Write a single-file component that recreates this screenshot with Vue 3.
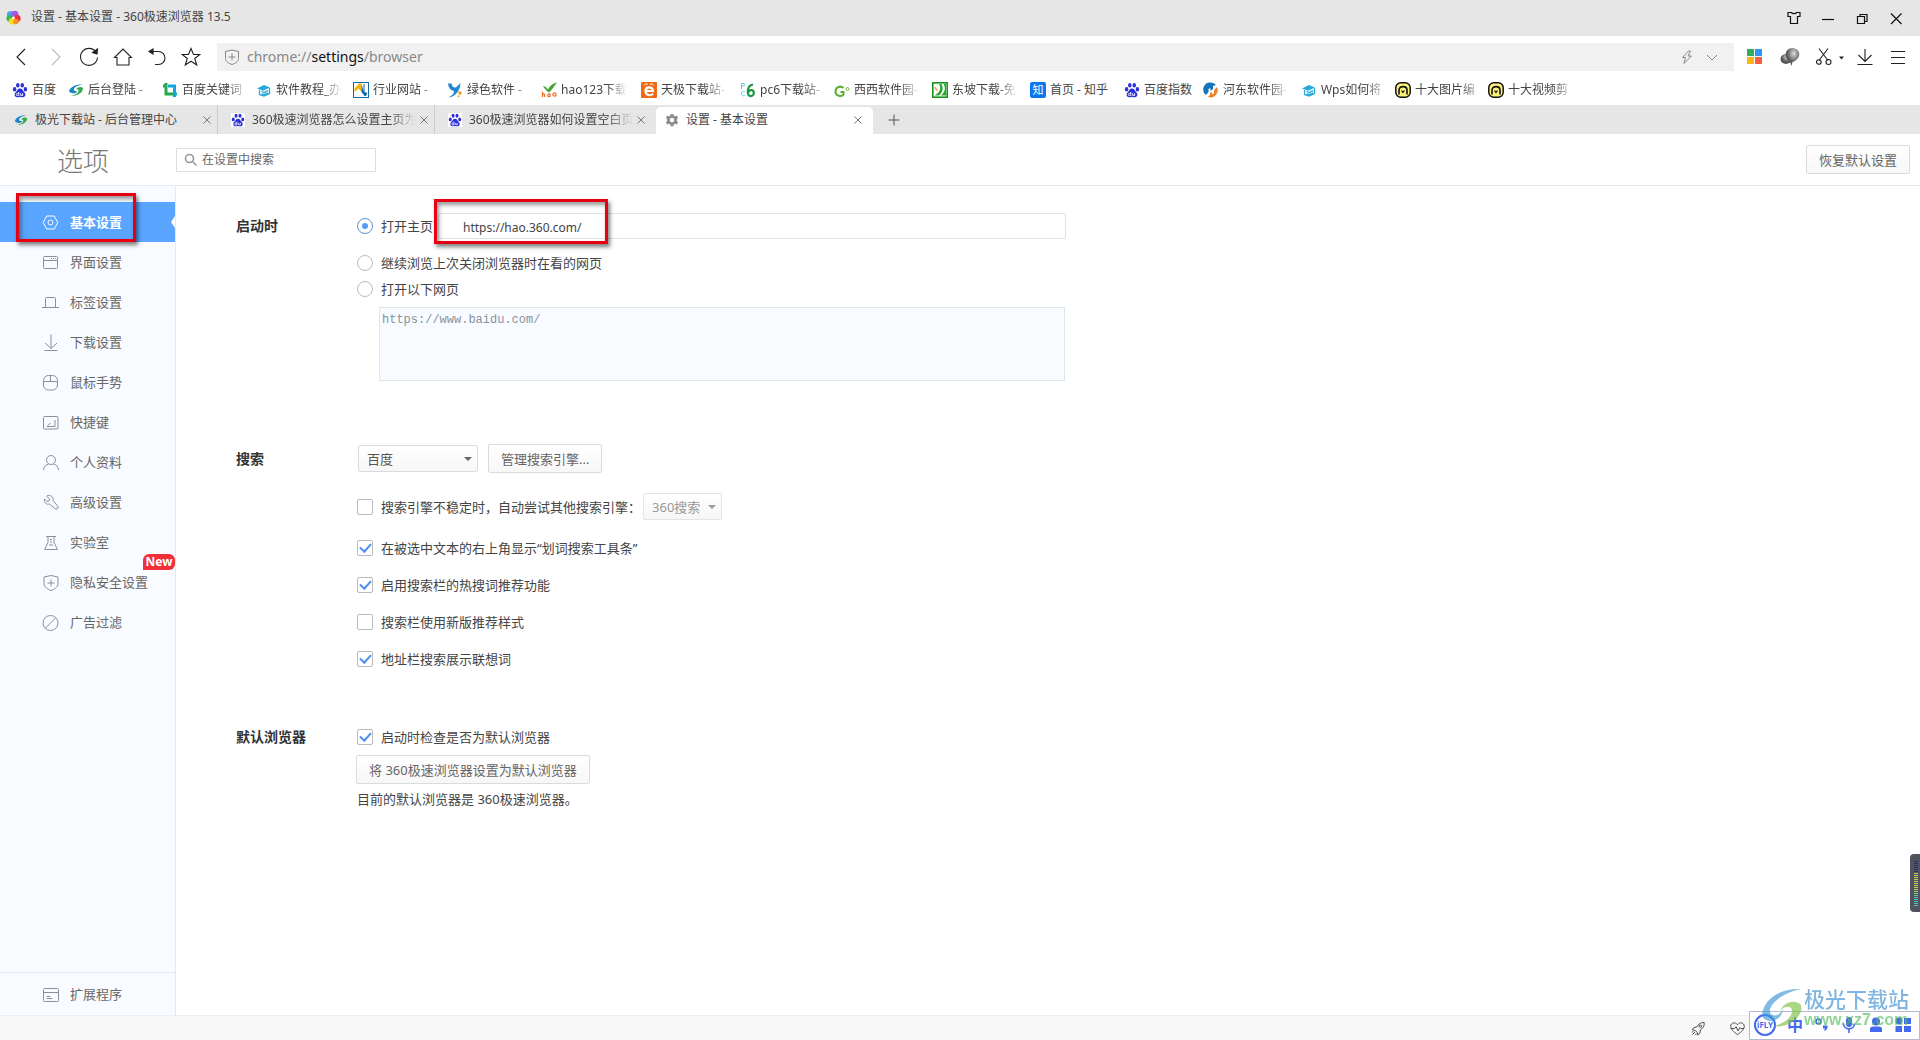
<script setup>
import { ref } from 'vue'

const paw =
  '<g fill="#2a2fd8"><ellipse cx="2.6" cy="7.3" rx="1.7" ry="2.2"/><ellipse cx="5.8" cy="3.2" rx="1.7" ry="2.3"/><ellipse cx="10.3" cy="3.2" rx="1.7" ry="2.3"/><ellipse cx="13.4" cy="7.3" rx="1.7" ry="2.2"/><path d="M8 6.6c2.4 0 2.8 2.4 4.3 3.7 1.8 1.5 1.4 4.8-1.3 4.9-1.300.1-1.800-.3-3-.3s-1.700.4-3 .3c-2.700-.1-3.100-3.400-1.300-4.900C5.200 9 5.600 6.600 8 6.600z"/></g><path d="M6.800 10v3.600H5.400a1 1 0 0 1 0-2.200h1.400M8.700 11.200v2.200h2v-2.200" fill="none" stroke="#fff" stroke-width=".9"/>'
const swirl =
  '<path d="M1 9.500C2 5 7 2.300 14.500 2.500 9 3.400 6 5.500 5.800 7.600c-.1 1.700 2.200 2 3.700 1.400C8 12 3.500 12 1 9.500z" fill="#1686c9"/><path d="M15 6c0 4.500-5 8-12.500 7.800C7 13 10.300 11 10.600 9c.2-1.600-1.400-1.900-2.600-1.600C10 4.600 13.500 4.500 15 6z" fill="#37a94a"/>'
const cap =
  '<path d="M1 6.500 8 3l6 2.500-7 3.300z" fill="#27a9d8"/><g fill="none" stroke="#27a9d8" stroke-width="1.300"><path d="M3.500 8v4.500L8 14l5.500-2.500V6M5.500 9.500l2.500 1 4-1.800M5.500 12l2.500.6 4-1.800"/></g>'
const face =
  '<rect x=".8" y=".8" width="14.400" height="14.400" rx="5" fill="#fff27a" stroke="#111" stroke-width="1.500"/><path d="M4 12.500V8c0-4.500 8-4.500 8 0v4.500" fill="none" stroke="#111" stroke-width="1.600"/><path d="M6.500 8.500 8 10.500l1.500-2" fill="none" stroke="#111" stroke-width="1.200"/>'

const art = {
  paw,
  swirl,
  cap,
  face,
  crop: '<path d="M4 1v11h8M1 4h4" stroke="#27a84a" fill="none" stroke-width="3"/><path d="M6 4h6.500v11M12 12h3" stroke="#16a5d8" fill="none" stroke-width="3"/>',
  industry: '<rect x=".5" y=".5" width="15" height="15" fill="#fff" stroke="#1269a8"/><path d="M1.500 6.500 6 1.500h2.500V10L5.500 6.500 1.500 10z" fill="#f5b400"/><path d="M8.500 2v8l3 4h1.500l1.500-3-3-1V2h-1v7z" fill="#1269a8"/>',
  green: '<path d="M1 1.500h3.500C5 4.500 6.500 6 8.500 5.500 10.500 5 11 3 13.500 1 13 8 9.500 14.500 1.500 15.500 5 13.500 7 12 7 9 3.500 8.500 1.500 6 1 1.500z" fill="#1e88d2"/><circle cx="13" cy="11" r="1.800" fill="#f39a27"/><circle cx="11.500" cy="14.300" r="1" fill="#f39a27"/>',
  hao: '<path d="M2 4c3 .5 4 2 5 3.500C9 4 11 1.500 16 .5 14 3 11 8 8 10.500 5.500 9 3.500 7 2 4z" fill="#4aa52e"/><path d="M1.500 9.500v5.500M1.500 12.500c1-1 2-1 2 .5V15M12 12a1.500 1.500 0 1 0 3 1 1.500 1.500 0 0 0-3-1zM9 14.500c-3 1-3-3 0-2.500V15" fill="none" stroke="#ee6b22" stroke-width="1.200"/>',
  tianji: '<rect width="16" height="16" rx="1" fill="#f06a16"/><path d="M12 11.500c-2 3-7.500 2-7.500-2.500s7-5 7.500 0H5" fill="none" stroke="#fff" stroke-width="2.200"/><path d="M3 3.500 5 1.500l1.500 1M9 2.500l2-1 2 2" stroke="#fff" fill="none"/>',
  pc6: '<path d="M1.500 7V1.500H4c1 0 1 2.500-.5 2.500h-2M5 10c-1-1-3.500-1-3.500 1.500S4 14.500 5 13" stroke="#64c9dd" fill="none"/><path d="M13 2.500C9.500 3 7.800 6 7.800 10c0 5.500 6 5 6 1 0-3.500-4.500-4-5.800-.5" fill="none" stroke="#1d9746" stroke-width="2.200"/>',
  xixi: '<path d="M9.500 6C7 3.500 1.500 4.500 1.500 9.500s6.500 5.500 8 3V10H6.500" fill="none" stroke="#5cae35" stroke-width="2"/><circle cx="13.500" cy="7" r="1.500" fill="none" stroke="#7dbb58"/>',
  dongpo: '<rect x=".8" y=".8" width="14.400" height="14.400" fill="#fff" stroke="#18931b" stroke-width="1.600"/><path d="M7 2c2.500 4 1.500 8-4.500 11.500H7C11 10 11.500 6 9.500 2z" fill="#25a52b"/><path d="M11.500 2c2.500 4 1.500 8-2.500 11.500h5V2z" fill="#25a52b"/><path d="m3 5 2 4" stroke="#f69b54" stroke-width="1.500"/>',
  hedong: '<path d="M8 .5A7 7 0 0 0 3 13l2.500-3V7l2-1v3L10 7V4l3-1A7 7 0 0 0 8 .5z" fill="#1674b9"/><path d="M14 5A7.300 7.300 0 0 1 5 15l2-2v-2l2-1v2.500l2-1V8z" fill="#f08126"/>',
  gear: '<path d="M6.500 1h3l.5 2 1.500.8 2-.8 1.500 2.600L13.500 7v2l1.500 1.400-1.500 2.600-2-.8-1.500.8-.5 2h-3L6 13l-1.500-.8-2 .8L1 10.400 2.500 9V7L1 5.600 2.500 3l2 .8L6 3zM8 5.500a2.500 2.500 0 1 0 0 5 2.500 2.500 0 0 0 0-5z" fill="#8c8c8c" fill-rule="evenodd"/>',
}

const bookmarks = [
  { t: '百度', i: 'paw', w: 56 },
  { t: '后台登陆 -', i: 'swirl', w: 94 },
  { t: '百度关键词', i: 'crop', w: 94 },
  { t: '软件教程_办', i: 'cap', w: 97 },
  { t: '行业网站 -', i: 'industry', w: 94 },
  { t: '绿色软件 -', i: 'green', w: 94 },
  { t: 'hao123下载', i: 'hao', w: 100 },
  { t: '天极下载站-', i: 'tianji', w: 99 },
  { t: 'pc6下载站-', i: 'pc6', w: 94 },
  { t: '西西软件园-', i: 'xixi', w: 98 },
  { t: '东坡下载-免', i: 'dongpo', w: 98 },
  { t: '首页 - 知乎', i: 'zhihu', w: 94, full: true },
  { t: '百度指数', i: 'paw', w: 79 },
  { t: '河东软件园-', i: 'hedong', w: 98 },
  { t: 'Wps如何将', i: 'cap', w: 94 },
  { t: '十大图片编', i: 'face', w: 93 },
  { t: '十大视频剪', i: 'face', w: 94 },
]

const tabs = [
  { t: '极光下载站 - 后台管理中心', i: 'swirl' },
  { t: '360极速浏览器怎么设置主页为', i: 'paw', fade: true },
  { t: '360极速浏览器如何设置空白页', i: 'paw', fade: true },
  { t: '设置 - 基本设置', i: 'gear', active: true },
]

const nav = [
  { t: '基本设置', active: true, d: '<path d="M4.700 2h7.600l3.500 6.500-3.500 6.500H4.700L1.200 8.500z"/><circle cx="8.500" cy="8.500" r="2.500"/>' },
  { t: '界面设置', d: '<rect x="1.500" y="2.500" width="14" height="12" rx="1"/><path d="M1.500 6.500h14M9 4.500h1M11 4.500h1M13 4.500h1"/>' },
  { t: '标签设置', d: '<path d="M0 13.500h17M3.500 13.500v-9a1 1 0 0 1 1-1h8a1 1 0 0 1 1 1v9"/>' },
  { t: '下载设置', d: '<path d="M9 .5v14M3 9l6 5.500L15 9M2.500 16.500h13"/>' },
  { t: '鼠标手势', d: '<rect x="1.500" y="1.500" width="14" height="14.500" rx="5"/><path d="M1.500 7.500h14M8.500 1.500v6"/>' },
  { t: '快捷键', d: '<rect x="1.500" y="2.500" width="14.500" height="12.500" rx="1"/><path d="M13 6v6.500H5M8.500 9 5 12.500"/>' },
  { t: '个人资料', d: '<circle cx="9" cy="6" r="4.500"/><path d="M1.500 16c0-3 2.500-5.500 5-5.800M11.500 10.200c2.500.3 5 2.800 5 5.800"/>' },
  { t: '高级设置', d: '<path d="M5 2.500 7.500 5 7 7l-2 .5L2.500 5c-.8 3.500 2 6 5 5l6 5c1.500 1 3.500-1 2.500-2.500l-5-6C12 3 8.500.500 5 1.800z"/><path d="M14 13.500h.6"/>' },
  { t: '实验室', d: '<path d="M4 2.500h10M6 3v5.500l-3.500 7h13L12 8.500V3M8 5.500h2M8 8h2M7 11h4"/>' },
  { t: '隐私安全设置', badge: 'New', d: '<path d="M9 1.500 16 3v7c0 3-4 5.500-7 6.500-3-1-7-3.500-7-6.500V3z"/><path d="M5.500 9h7M9 5.500v7"/>' },
  { t: '广告过滤', d: '<circle cx="8.500" cy="9" r="7.500"/><path d="m3.500 14 10-10"/>' },
]

const startup = ref('home')
const home = ref('https://hao.360.com/')
const pages = ref('https://www.baidu.com/')
const keyword = ref('')
const engine = ref('百度')
const fallback = ref(false)
const options = ref([
  { t: '在被选中文本的右上角显示“划词搜索工具条”', on: true },
  { t: '启用搜索栏的热搜词推荐功能', on: true },
  { t: '搜索栏使用新版推荐样式', on: false },
  { t: '地址栏搜索展示联想词', on: true },
])
const checkDefault = ref(true)
</script>

<template>
  <div class="browser">
    <header class="titlebar">
      <svg class="logo" viewBox="0 0 16 16">
        <circle cx="5" cy="5" r="4" fill="#4aa3f0" /><circle cx="9.500" cy="4.500" r="3.800" fill="#a35be0" />
        <circle cx="12" cy="9" r="3.600" fill="#ef2f3c" /><circle cx="3.800" cy="9" r="3.300" fill="#31b84c" />
        <circle cx="6.500" cy="12" r="3.500" fill="#f7dc1c" /><circle cx="10.500" cy="12.200" r="3" fill="#f9912a" />
        <circle cx="8" cy="8.300" r="1.500" fill="#fff" />
      </svg>
      <span class="window-title">设置 - 基本设置 - 360极速浏览器 13.5</span>
      <div class="window-buttons">
        <button aria-label="皮肤"><svg viewBox="0 0 16 16"><path d="M2 2.500h3.500c.5 1.500 4.500 1.500 5 0H14v4h-2.500v7h-7v-7H2z" /></svg></button>
        <button aria-label="最小化"><svg viewBox="0 0 16 16"><path d="M2 9.500h12" /></svg></button>
        <button aria-label="还原"><svg viewBox="0 0 16 16"><path d="M3.500 6.500h7v7h-7zM6 6V4.500h7v7h-2" /></svg></button>
        <button aria-label="关闭"><svg viewBox="0 0 16 16"><path d="m3 3.500 10.500 10.500M13.500 3.500 3 14" /></svg></button>
      </div>
    </header>

    <div class="toolbar">
      <div class="nav-buttons">
        <button aria-label="后退"><svg viewBox="0 0 20 20"><path d="m14 2-8 8 8 8" /></svg></button>
        <button aria-label="前进" class="dim"><svg viewBox="0 0 20 20"><path d="m7 2 8 8-8 8" /></svg></button>
        <button aria-label="刷新"><svg viewBox="0 0 20 20"><path d="M18.500 10.500A8.500 8.500 0 1 1 17 5" /><path d="m18.500 2-.5 5-4.500-1.500z" fill="#222" /></svg></button>
        <button aria-label="主页"><svg viewBox="0 0 20 20"><path d="m1.500 10.500 8.500-8.500 8.500 8.500H16v7.500H4v-7.500z" /></svg></button>
        <button aria-label="恢复"><svg viewBox="0 0 20 20"><path d="M3 4.500h8.500a6.400 6.400 0 0 1 0 13H8" /><path d="m6 2-4 2.500L6 7z" fill="#222" /></svg></button>
        <button aria-label="收藏"><svg viewBox="0 0 20 20"><path d="m10 1.500 2.500 6h6.300L13.700 11.500l2 6.500L10 14.200 4.300 18l2-6.500L1.200 7.500h6.300z" /></svg></button>
      </div>
      <div class="address">
        <svg class="shield" viewBox="0 0 16 16"><path d="M8 1 14.500 2.500v7c0 3-3.500 5-6.500 6-3-1-6.500-3-6.500-6v-7zM8 4.500v7M4.500 8h7" /></svg>
        <span class="url">chrome://<b>settings</b>/browser</span>
        <svg class="addr-icon" viewBox="0 0 16 16"><path d="m9.500 2-6 6.500h3L5 14.500 12.500 7h-3.500L11.500 2z" /></svg>
        <svg class="addr-icon" viewBox="0 0 16 16"><path d="m3 6 5 5 5-5" /></svg>
      </div>
      <div class="tools">
        <button aria-label="应用" class="apps"><svg viewBox="0 0 15 15"><path d="M0 0h7v7H0z" fill="#2fae5b" /><path d="M8 0h7v7H8z" fill="#2f94f5" /><path d="M0 8h7v7H0z" fill="#fbb315" /><path d="M8 8h7v7H8z" fill="#f55f3c" /></svg></button>
        <button aria-label="扩展" class="ball"><svg viewBox="0 0 20 20">
          <defs><radialGradient id="ball" cx=".6" cy=".3"><stop offset="0" stop-color="#ddd" /><stop offset=".5" stop-color="#999" /><stop offset="1" stop-color="#555" /></radialGradient></defs>
          <ellipse cx="6" cy="12" rx="5.500" ry="5" fill="url(#ball)" stroke="none" /><path d="M12.500 1c10 1 8 12 0 14l-1 4-1.500-4.500C3 11 5 1 12.500 1z" fill="url(#ball)" stroke="none" />
        </svg></button>
        <button aria-label="截图" class="scissors"><svg viewBox="0 0 28 20"><path d="m3 1.500 9 12M12 1.500l-9 12" /><circle cx="2.800" cy="15" r="2.300" /><circle cx="12.500" cy="15" r="2.500" /><path d="M23 9.500h5l-2.500 3z" fill="#222" stroke="none" /></svg></button>
        <button aria-label="下载"><svg viewBox="0 0 20 20"><path d="M10 2v12.500M3.500 8l6.500 6.500L16.500 8M2.500 17.500h15" /></svg></button>
        <button aria-label="菜单"><svg viewBox="0 0 20 20"><path d="M3 4.500h14M3 10.500h14M3 16.500h14" /></svg></button>
      </div>
    </div>

    <nav class="bookmarks">
      <a v-for="b in bookmarks" :key="b.t" href="#" :style="{ width: b.w + 'px' }">
        <span v-if="b.i === 'zhihu'" class="zhihu">知</span>
        <svg v-else viewBox="0 0 16 16" v-html="art[b.i]"></svg>
        <span class="bm-text" :class="{ fade: b.w > 80 && !b.full }">{{ b.t }}</span>
      </a>
    </nav>

    <div class="tabs">
      <div v-for="t in tabs" :key="t.t" class="tab" :class="{ active: t.active }">
        <svg class="tab-icon" :class="{ white: t.i === 'paw' }" viewBox="0 0 16 16" v-html="art[t.i]"></svg>
        <span class="tab-text" :class="{ fade: t.fade }">{{ t.t }}</span>
        <button aria-label="关闭标签"><svg viewBox="0 0 8 8"><path d="m.500.500 7 7M7.500.500l-7 7" /></svg></button>
      </div>
      <button class="new-tab" aria-label="新标签"><svg viewBox="0 0 12 12"><path d="M6 .5v11M.5 6h11" /></svg></button>
    </div>

    <div class="options-head">
      <h1>选项</h1>
      <label class="search">
        <svg viewBox="0 0 14 14"><circle cx="5.500" cy="5.500" r="4" /><path d="m8.500 8.500 4 4" /></svg>
        <input v-model="keyword" type="text" placeholder="在设置中搜索" aria-label="在设置中搜索" />
      </label>
      <button class="btn">恢复默认设置</button>
    </div>

    <div class="body">
      <aside>
        <ul>
          <li v-for="n in nav" :key="n.t">
            <a href="#" :class="{ active: n.active }">
              <svg viewBox="0 0 18 18" v-html="n.d"></svg>{{ n.t }}
            </a>
            <span v-if="n.badge" class="badge">{{ n.badge }}</span>
            <span v-if="n.active" class="mark mark-nav"></span>
          </li>
        </ul>
        <a href="#" class="extensions">
          <svg viewBox="0 0 18 18"><rect x="1.500" y="2.500" width="15" height="13" rx="1" /><path d="M1.500 6.500h15M4.500 10.500h4M4.500 12.500h6" /></svg>扩展程序
        </a>
      </aside>

      <main>
        <section>
          <h2>启动时</h2>
          <div class="fields">
            <div class="row home-row">
              <label><input v-model="startup" type="radio" name="startup" value="home" />打开主页</label>
              <input v-model="home" class="home" type="text" aria-label="主页地址" />
              <span class="mark mark-home"></span>
            </div>
            <div class="row spaced"><label><input v-model="startup" type="radio" name="startup" value="last" />继续浏览上次关闭浏览器时在看的网页</label></div>
            <div class="row"><label><input v-model="startup" type="radio" name="startup" value="pages" />打开以下网页</label></div>
            <textarea v-model="pages" aria-label="网页列表"></textarea>
          </div>
        </section>

        <section class="search-section">
          <h2>搜索</h2>
          <div class="fields">
            <div class="row engine-row">
              <span class="select wide"><select v-model="engine" aria-label="搜索引擎"><option>百度</option></select></span>
              <button class="btn">管理搜索引擎...</button>
            </div>
            <div class="row fallback-row">
              <label><input v-model="fallback" type="checkbox" />搜索引擎不稳定时，自动尝试其他搜索引擎：</label>
              <span class="select off"><select disabled aria-label="备用搜索引擎"><option>360搜索</option></select></span>
            </div>
            <div v-for="o in options" :key="o.t" class="row spaced">
              <label><input v-model="o.on" type="checkbox" />{{ o.t }}</label>
            </div>
          </div>
        </section>

        <section class="default-section">
          <h2>默认浏览器</h2>
          <div class="fields">
            <div class="row"><label><input v-model="checkDefault" type="checkbox" />启动时检查是否为默认浏览器</label></div>
            <button class="btn set-default">将 360极速浏览器设置为默认浏览器</button>
            <p>目前的默认浏览器是 360极速浏览器。</p>
          </div>
        </section>
      </main>
    </div>

    <footer class="status">
      <svg viewBox="0 0 16 16"><path d="M14 1.500c-4 0-6 2-8 5L3 7 1.500 9.500l3 .5 2 2 .5 3L9.500 13l.500-3.500c3-2 4.500-4 4-8zM1.500 14.500l3-3M4.500 15l1.500-1.500M1 12l1.500-1" /><circle cx="10" cy="5.500" r="1.300" /></svg>
      <svg viewBox="0 0 16 16"><path d="M8 14.500C3 11 .8 8.500.8 5.500.8 2 5.500.5 8 4c2.500-3.500 7.200-2 7.200 1.500 0 3-2.200 5.500-7.200 9zM.8 8h4L6.500 6l2 4.500L10.500 7l1 1h3.500" /></svg>
    </footer>

    <div class="ime">
      <span class="ifly">iFLY</span>
      <span class="zh">中</span>
      <svg viewBox="0 0 16 16"><circle cx="4.500" cy="4.500" r="2.500" fill="none" stroke="#4468ee" stroke-width="1.600" /><path d="M9 8.500h4.500c.5 3-1 5-3.500 5.500l1-2.500H9z" /></svg>
      <svg viewBox="0 0 16 16"><rect x="5" y="0" width="6" height="10" rx="3" /><path d="M2.500 6.500c0 7 11 7 11 0M8 12v4" fill="none" stroke="#4468ee" stroke-width="1.600" /></svg>
      <svg viewBox="0 0 16 16"><circle cx="8" cy="4.500" r="4" /><path d="M2 15V12q0-2.500 3-2.500h6q3 0 3 2.500v3z" /></svg>
      <svg viewBox="0 0 16 16"><circle cx="4" cy="4" r="3.500" /><rect x="9" y="1" width="7" height="6" /><rect x=".5" y="9" width="6.500" height="6" /><rect x="9" y="9" width="7" height="6" /></svg>
    </div>
    <div class="watermark">
      <svg viewBox="0 0 42 40">
        <path d="M1 28C2 12 18 0 40 1 25 4 12 12 9 21c-2 8 10 9 13 0-1 12-16 16-21 7z" fill="#3b97d3" />
        <path d="M40 17c3 11-12 24-28 21 10-2 19-8 19-15 0-6-8-5-12 0 3-8 14-13 21-6z" fill="#7dc242" />
      </svg>
      <div class="wm-text"><span class="wm-name">极光下载站</span><span class="wm-url">www.xz7.com</span></div>
    </div>
    <div class="meter"><i></i></div>
  </div>
</template>

<style>
body {
  margin: 0;
}
</style>

<style scoped>
.browser {
  position: relative;
  display: flex;
  flex-direction: column;
  min-height: 100vh;
  background: #fff;
  color: #444;
  font: 12px/18px "Noto Sans", "Noto Sans CJK SC", sans-serif;
  overflow: hidden;
}
.browser * {
  box-sizing: border-box;
}
button {
  border: 0;
  padding: 0;
  background: none;
  font: inherit;
  color: inherit;
  display: flex;
  align-items: center;
  justify-content: center;
}
input,
select,
textarea {
  font: inherit;
  color: inherit;
  margin: 0;
}
a {
  color: inherit;
  text-decoration: none;
}
svg {
  display: block;
  flex: none;
}
.titlebar {
  display: flex;
  align-items: center;
  height: 36px;
  padding: 0 16px 2px 6px;
  background: #e6e6e6;
}
.logo {
  width: 15px;
  height: 15px;
  margin-right: 10px;
}
.window-buttons {
  display: flex;
  gap: 18px;
  margin-left: auto;
  padding-top: 2px;
}
.window-buttons svg {
  width: 16px;
  height: 16px;
  fill: none;
  stroke: #111;
  stroke-width: 1.2;
}
.toolbar {
  display: flex;
  align-items: center;
  height: 41px;
  padding: 0 12px 0 11px;
}
.toolbar > div {
  display: flex;
  align-items: center;
}
.nav-buttons {
  gap: 14px;
  margin-right: 16px;
}
.nav-buttons svg,
.tools svg {
  width: 20px;
  height: 20px;
  fill: none;
  stroke: #222;
  stroke-width: 1.1;
}
.nav-buttons .dim svg {
  stroke: #bbb;
}
.address {
  flex: 1;
  height: 28px;
  padding: 0 14px 0 7px;
  background: #f1f1f1;
}
.address svg {
  width: 16px;
  height: 16px;
  fill: none;
  stroke: #888;
}
.url {
  flex: 1;
  margin-left: 7px;
  font-size: 14px;
  color: #888;
}
.url b {
  font-weight: 400;
  color: #111;
}
.addr-icon + .addr-icon {
  margin-left: 9px;
}
.tools .apps {
  margin: 0 18px 0 13px;
}
.tools .apps svg {
  width: 15px;
  height: 15px;
  stroke: none;
}
.tools .ball {
  margin-right: 16px;
}
.tools .scissors {
  margin-right: 11px;
}
.tools .scissors svg {
  width: 28px;
}
.tools button:last-child {
  margin-left: 13px;
}
.bookmarks {
  display: flex;
  height: 28px;
  padding: 0 0 2px 12px;
}
.bookmarks a {
  display: flex;
  align-items: center;
  flex: none;
  gap: 4px;
}
.bookmarks svg,
.zhihu {
  width: 16px;
  height: 16px;
  flex: none;
}
.zhihu {
  border-radius: 2px;
  background: #0a78f0;
  color: #fff;
  font-size: 11px;
  line-height: 16px;
  text-align: center;
}
.bm-text {
  flex: none;
  white-space: nowrap;
}
.bm-text.fade {
  mask-image: linear-gradient(90deg, #000 46px, transparent 66px);
}
.tabs {
  display: flex;
  height: 29px;
  padding-left: 1px;
  background: #e6e6e6;
}
.tab {
  position: relative;
  display: flex;
  align-items: center;
  width: 217px;
  padding: 1px 6px 0 13px;
  border-right: 1px solid #ccc;
  isolation: isolate;
}
.tab:nth-child(3),
.tab.active {
  border-color: transparent;
}
.tab.active::before {
  content: "";
  position: absolute;
  z-index: -1;
  inset: 2px -5px 0 4px;
  border-radius: 5px 5px 0 0;
  background: #fff;
}
.tab-icon {
  width: 14px;
  height: 14px;
  margin-right: 7px;
}
.tab-icon.white {
  background: #fff;
}
.tab-text {
  flex: none;
  white-space: nowrap;
}
.tab-text.fade {
  mask-image: linear-gradient(90deg, #000 138px, transparent 164px);
}
.tab button {
  margin-left: auto;
}
.tab button svg {
  width: 8px;
  height: 8px;
  stroke: #777;
}
.new-tab {
  margin-left: 19px;
}
.new-tab svg {
  width: 12px;
  height: 12px;
  stroke: #555;
}
.options-head {
  display: flex;
  align-items: center;
  height: 52px;
  padding: 0 10px 0 0;
  border-bottom: 1px solid #e6eaee;
}
h1 {
  width: 176px;
  margin: 0;
  padding: 2px 0 0 57px;
  font-size: 26px;
  line-height: 40px;
  font-weight: 300;
  color: #777;
}
.search {
  display: flex;
  align-items: center;
  width: 200px;
  height: 24px;
  padding: 0 7px;
  border: 1px solid #ddd;
}
.search svg {
  width: 14px;
  height: 14px;
  margin-right: 4px;
  fill: none;
  stroke: #999;
  stroke-width: 1.6;
}
.search input {
  flex: 1;
  min-width: 0;
  border: 0;
  padding: 1px 0 0;
  outline: 0;
}
.search input::placeholder {
  color: #666;
}
.btn {
  height: 29px;
  padding: 0 12px;
  border: 1px solid #d8dcdf;
  border-radius: 2px;
  background: linear-gradient(#fff, #f7f7f7);
  color: #666;
  font-size: 13px;
  white-space: nowrap;
}
.options-head .btn {
  margin-left: auto;
}
.body {
  display: flex;
  flex: 1;
}
aside {
  display: flex;
  flex-direction: column;
  width: 176px;
  flex: none;
  border-right: 1px solid #e2e9f1;
  background: #f8fbff;
  font-size: 13px;
  color: #666;
}
ul {
  list-style: none;
  flex: 1;
  margin: 0;
  padding: 16px 0 0;
}
li {
  position: relative;
}
aside a {
  display: flex;
  align-items: center;
  height: 40px;
  padding-left: 42px;
}
aside a svg {
  width: 18px;
  height: 18px;
  margin: 2px 10px 0 0;
  fill: none;
  stroke: #8c8f94;
}
aside a.active {
  position: relative;
  background: #59a5ff;
  color: #fff;
  font-weight: 700;
}
aside a.active svg {
  stroke: #fff;
}
aside a.active::after {
  content: "";
  position: absolute;
  right: 0;
  top: 14px;
  border: 6px solid transparent;
  border-left: 0;
  border-right: 4px solid #fff;
}
.badge {
  position: absolute;
  right: 0;
  top: -8px;
  width: 32px;
  height: 16px;
  border-radius: 6px 6px 6px 0;
  background: #f2303a;
  color: #fff;
  font-weight: 700;
  font-size: 12px;
  line-height: 16px;
  text-align: center;
}
.mark {
  position: absolute;
  border: 3px solid #e60012;
  box-shadow: 2px 3px 4px rgba(0, 0, 0, 0.5), inset 2px 3px 4px rgba(0, 0, 0, 0.4);
  pointer-events: none;
}
.mark-nav {
  left: 16px;
  top: -9px;
  width: 120px;
  height: 49px;
}
.extensions {
  border-top: 1px solid #dfe7ef;
  height: 43px;
  padding-bottom: 1px;
}
main {
  flex: 1;
  padding: 27px 20px 20px 60px;
  font-size: 13px;
}
section {
  display: flex;
}
h2 {
  width: 121px;
  flex: none;
  margin: 0;
  font-size: 14px;
  line-height: 26px;
  color: #333;
}
.fields {
  width: 709px;
}
.row {
  position: relative;
  display: flex;
  align-items: center;
  height: 26px;
}
.row label {
  display: flex;
  align-items: center;
  white-space: nowrap;
}
.row.spaced {
  margin-top: 11px;
}
input[type="radio"],
input[type="checkbox"] {
  appearance: none;
  display: flex;
  align-items: center;
  justify-content: center;
  width: 16px;
  height: 16px;
  margin-right: 8px;
  border: 1px solid #bbb;
  border-radius: 2px;
  background: #fff;
}
input[type="radio"] {
  border-radius: 50%;
}
input[type="radio"]:checked {
  border-color: #5b8fe0;
}
input[type="radio"]:checked::after {
  content: "";
  width: 6px;
  height: 6px;
  border-radius: 50%;
  background: #529dfb;
}
input[type="checkbox"]:checked::after {
  content: "";
  width: 5px;
  height: 9px;
  margin-bottom: 3px;
  border: solid #4a90f0;
  border-width: 0 2px 2px 0;
  transform: rotate(42deg);
}
.home {
  flex: 1;
  height: 26px;
  margin-left: 5px;
  padding: 2px 0 0 24px;
  border: 1px solid #e0e3e6;
  border-radius: 2px;
  font-size: 12px;
}
.mark-home {
  left: 77px;
  top: -14px;
  width: 174px;
  height: 45px;
}
textarea {
  display: block;
  width: 686px;
  height: 74px;
  margin: 5px 0 0 22px;
  padding: 3px 2px;
  border: 1px solid #dde5ee;
  background: #f8fbff;
  color: #8a929b;
  font: 12px/18px "Liberation Mono", monospace;
  resize: none;
}
.search-section {
  margin-top: 63px;
}
.search-section h2 {
  line-height: 30px;
}
.engine-row {
  height: 29px;
  gap: 10px;
  padding-left: 1px;
}
.select {
  position: relative;
  display: flex;
  height: 27px;
}
.select::after {
  content: "";
  position: absolute;
  right: 6px;
  top: 12px;
  border: 4px solid transparent;
  border-bottom: 0;
  border-top-color: #666;
}
.select select {
  appearance: none;
  width: 79px;
  padding: 0 8px;
  border: 1px solid #d8dcdf;
  border-radius: 2px;
  background: linear-gradient(#fff, #f7f7f7);
  color: #555;
}
.wide select {
  width: 120px;
}
.off select {
  color: #999;
  border-color: #e2e5e8;
  opacity: 1;
}
.off::after {
  border-top-color: #999;
}
.fallback-row {
  height: 27px;
  margin: 20px 0 15px;
  gap: 2px;
}
.fallback-row + .spaced {
  margin-top: 0;
}
.default-section {
  margin-top: 52px;
}
.set-default {
  margin: 5px 0 2px -1px;
}
p {
  margin: 0;
  line-height: 26px;
}
.status {
  display: flex;
  align-items: center;
  justify-content: flex-end;
  gap: 24px;
  height: 25px;
  padding: 1px 175px 0 0;
  background: #f8f8f8;
  border-top: 1px solid #eee;
}
.status svg {
  width: 15px;
  height: 15px;
  fill: none;
  stroke: #444;
}
.ime {
  position: absolute;
  right: 0;
  bottom: 0;
  display: flex;
  align-items: center;
  width: 171px;
  height: 29px;
  padding: 0 8px 1px 4px;
  justify-content: space-between;
  border: 1px solid #b5b9d6;
  background: #fff;
}
.ime svg {
  width: 16px;
  height: 16px;
  fill: #4468ee;
}
.ifly {
  width: 22px;
  height: 22px;
  border: 2px solid #4468ee;
  border-radius: 50%;
  color: #4468ee;
  font-size: 8px;
  font-weight: 700;
  line-height: 18px;
  text-align: center;
}
.zh {
  color: #4468ee;
  font-size: 16px;
  font-weight: 700;
}
.watermark {
  position: absolute;
  right: 10px;
  bottom: 10px;
  display: flex;
  gap: 1px;
  opacity: 0.65;
  pointer-events: none;
}
.watermark svg {
  width: 42px;
  height: 40px;
}
.wm-text {
  display: flex;
  flex-direction: column;
  width: 106px;
  white-space: nowrap;
}
.wm-name {
  font-size: 21px;
  line-height: 22px;
  font-weight: 500;
  color: #3b8fd0;
}
.wm-url {
  font: 700 16px/20px "Liberation Sans", sans-serif;
  color: #55bb62;
}
.meter {
  position: absolute;
  right: 0;
  bottom: 128px;
  width: 10px;
  height: 58px;
  padding: 7px 2px 6px 4px;
  border-radius: 4px 0 0 4px;
  background: #50535f;
}
.meter i {
  display: block;
  height: 45px;
  background: repeating-linear-gradient(transparent 0 1px, #50535f 1px 2px), linear-gradient(#2c3060 12px, #c8d05a 12px 28px, #48c8b0 36px);
}
</style>
